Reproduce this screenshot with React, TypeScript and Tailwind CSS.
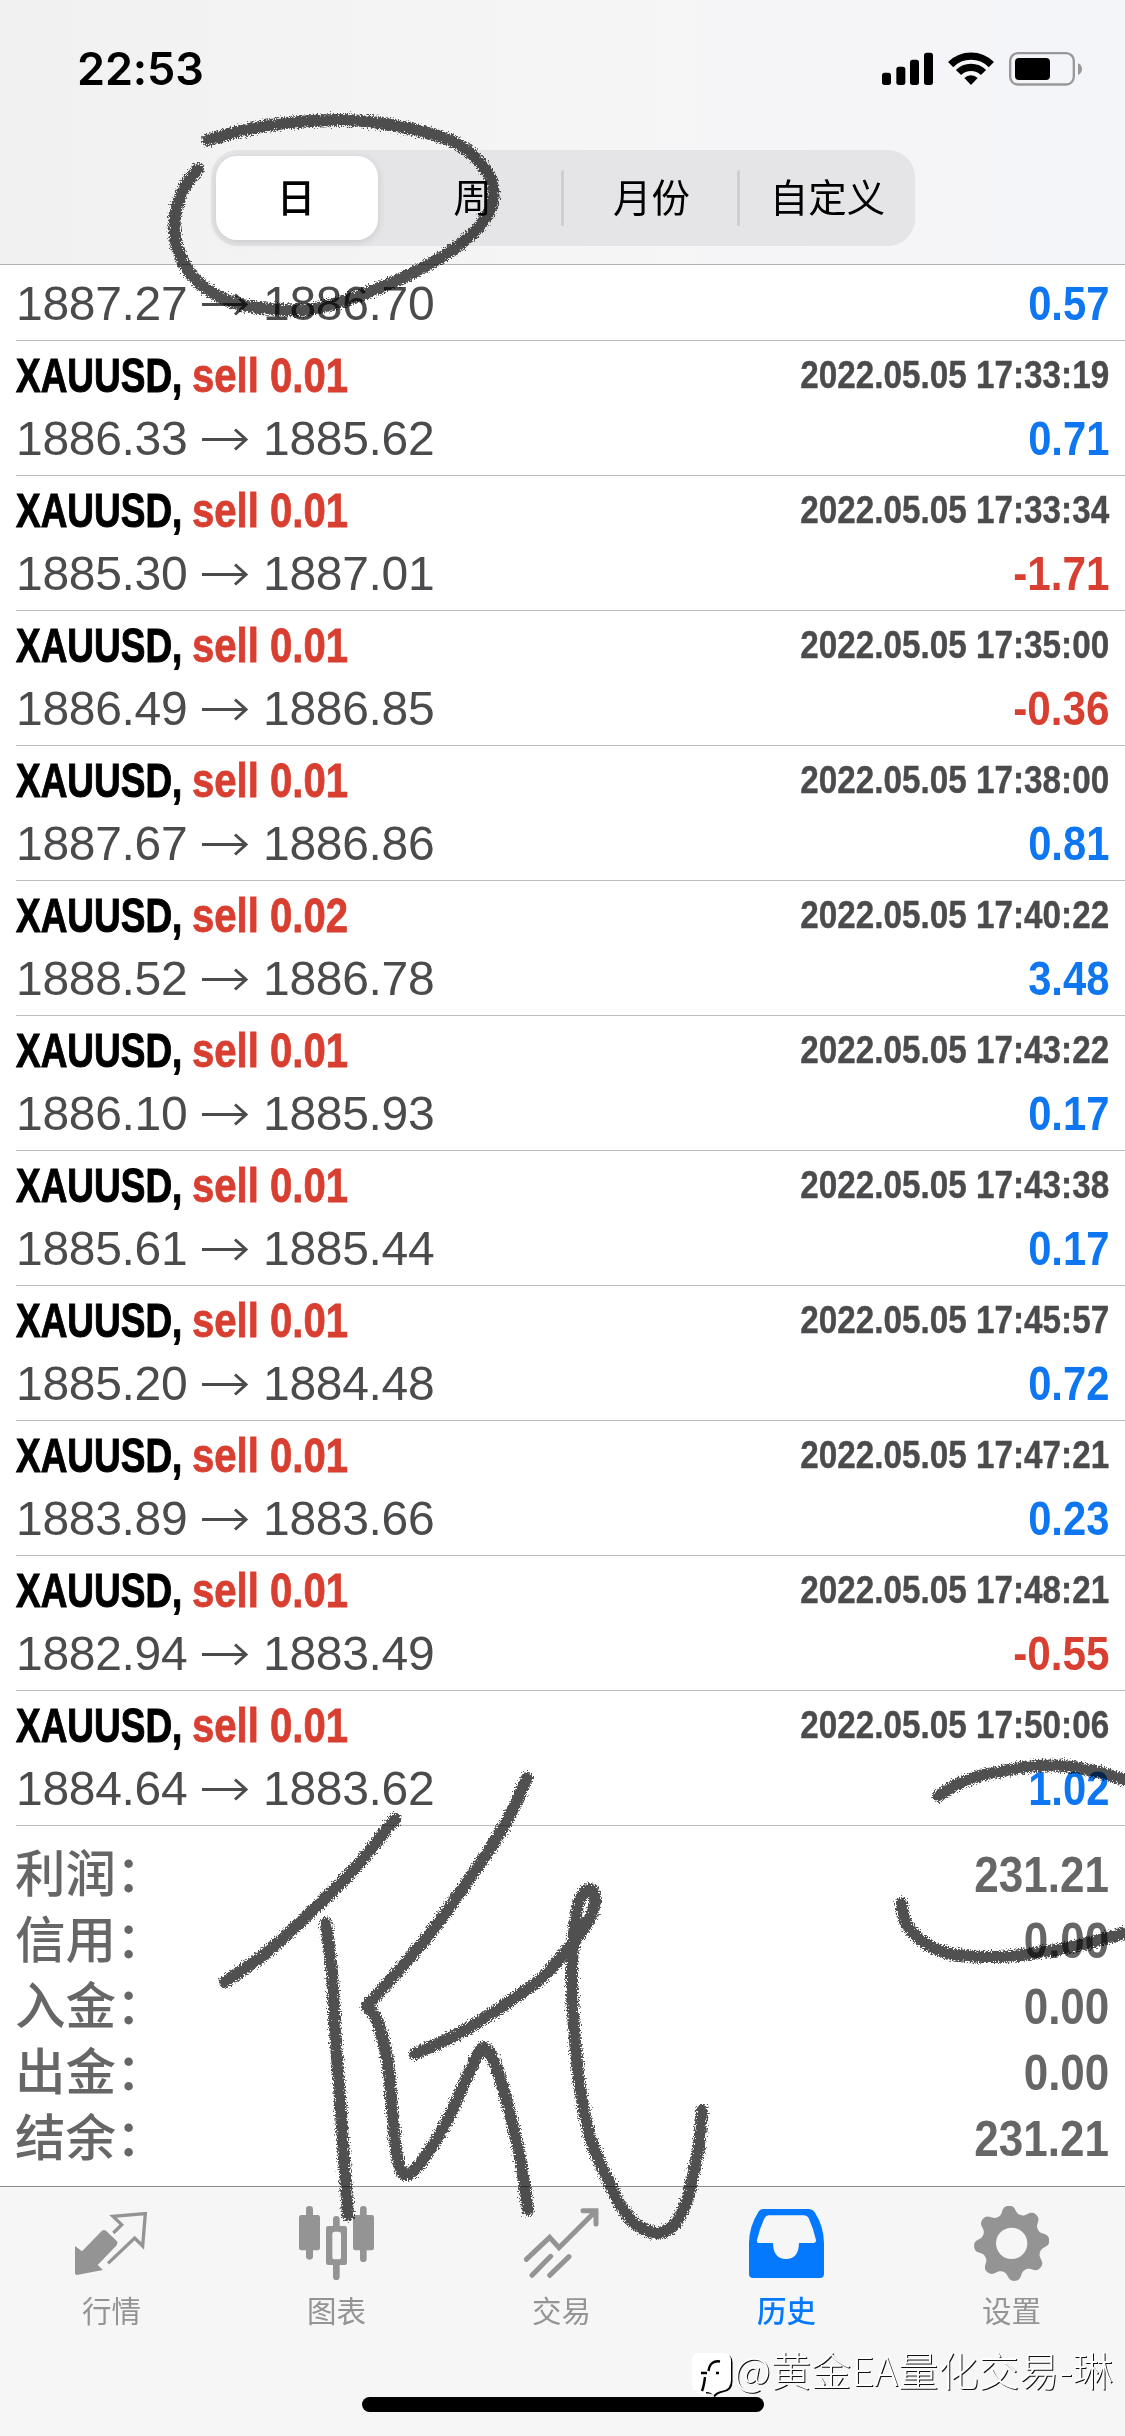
import React from "react";

type Point = [number, number];

const cjk = "font-['Noto_Sans_CJK_SC',sans-serif]";

const trades = [
  { lots: "0.01", time: "2022.05.05 17:33:19", open: "1886.33", close: "1885.62", profit: "0.71" },
  { lots: "0.01", time: "2022.05.05 17:33:34", open: "1885.30", close: "1887.01", profit: "-1.71" },
  { lots: "0.01", time: "2022.05.05 17:35:00", open: "1886.49", close: "1886.85", profit: "-0.36" },
  { lots: "0.01", time: "2022.05.05 17:38:00", open: "1887.67", close: "1886.86", profit: "0.81" },
  { lots: "0.02", time: "2022.05.05 17:40:22", open: "1888.52", close: "1886.78", profit: "3.48" },
  { lots: "0.01", time: "2022.05.05 17:43:22", open: "1886.10", close: "1885.93", profit: "0.17" },
  { lots: "0.01", time: "2022.05.05 17:43:38", open: "1885.61", close: "1885.44", profit: "0.17" },
  { lots: "0.01", time: "2022.05.05 17:45:57", open: "1885.20", close: "1884.48", profit: "0.72" },
  { lots: "0.01", time: "2022.05.05 17:47:21", open: "1883.89", close: "1883.66", profit: "0.23" },
  { lots: "0.01", time: "2022.05.05 17:48:21", open: "1882.94", close: "1883.49", profit: "-0.55" },
  { lots: "0.01", time: "2022.05.05 17:50:06", open: "1884.64", close: "1883.62", profit: "1.02" },
];

const summary = [
  ["利润", "231.21"],
  ["信用", "0.00"],
  ["入金", "0.00"],
  ["出金", "0.00"],
  ["结余", "231.21"],
];

const strokes: Point[][] = [
  [[208, 140], [245, 130], [287, 123], [345, 120], [402, 127], [456, 143], [487, 172], [493, 200], [478, 228], [440, 258], [384, 286], [323, 307], [284, 310], [235, 303], [197, 281], [178, 250], [175, 218], [183, 190], [198, 169]],
  [[395, 1819], [355, 1868], [312, 1911], [266, 1953], [225, 1982]],
  [[326, 1923], [332, 1974], [335, 2031], [340, 2098], [345, 2174], [348, 2215]],
  [[527, 1778], [503, 1828], [463, 1888], [424, 1941], [367, 2006]],
  [[367, 2006], [378, 2023], [388, 2064], [393, 2121], [398, 2161], [406, 2175], [422, 2161], [447, 2121], [470, 2071], [484, 2048], [497, 2069], [510, 2114], [521, 2163], [528, 2210]],
  [[415, 2054], [460, 2033], [503, 2006], [542, 1978], [560, 1958], [577, 1938], [590, 1918], [595, 1902], [593, 1891], [587, 1890], [579, 1902], [574, 1933], [572, 1973], [573, 2013], [579, 2080], [590, 2137], [608, 2180], [622, 2208], [637, 2225], [657, 2233], [674, 2225], [687, 2200], [694, 2170], [699, 2147], [702, 2110]],
  [[938, 1796], [958, 1784], [987, 1774], [1037, 1766], [1073, 1767], [1102, 1773], [1135, 1783]],
  [[901, 1903], [906, 1923], [922, 1941], [947, 1953], [987, 1957], [1030, 1954], [1080, 1945], [1135, 1930]],
];

function smooth(p: Point[]) {
  let d = `M${p[0][0]} ${p[0][1]}`;
  for (let i = 0; i < p.length - 1; i++) {
    const a = p[Math.max(i - 1, 0)];
    const b = p[i];
    const c = p[i + 1];
    const e = p[Math.min(i + 2, p.length - 1)];
    d += `C${b[0] + (c[0] - a[0]) / 6} ${b[1] + (c[1] - a[1]) / 6} ${c[0] - (e[0] - b[0]) / 6} ${c[1] - (e[1] - b[1]) / 6} ${c[0]} ${c[1]}`;
  }
  return d;
}

function gearOutline() {
  const pts: string[] = [];
  for (let i = 0; i < 240; i++) {
    const t = (i / 240) * Math.PI * 2;
    const r = 101 + 12 * (Math.tanh(1.3 * Math.cos(8 * (t + (5 * Math.PI) / 180))) / Math.tanh(1.3));
    pts.push(`${(995 + r * Math.cos(t)).toFixed(1)} ${(160 + r * Math.sin(t)).toFixed(1)}`);
  }
  return `M${pts.join("L")}Z`;
}

function Pencil() {
  return (
    <svg className="pointer-events-none absolute inset-0 mix-blend-multiply" width="1125" height="2436" viewBox="0 0 1125 2436" fill="none">
      <defs>
        <filter id="rough" filterUnits="userSpaceOnUse" x="0" y="0" width="1125" height="2436" colorInterpolationFilters="sRGB">
          <feTurbulence type="fractalNoise" baseFrequency="0.7" numOctaves="2" seed="4" result="n" />
          <feDisplacementMap in="SourceGraphic" in2="n" scale="9" xChannelSelector="R" yChannelSelector="G" />
        </filter>
      </defs>
      <g stroke="#505050" strokeWidth="12" strokeLinecap="round" strokeLinejoin="round" filter="url(#rough)">
        {strokes.map((s, i) => (
          <path key={i} d={smooth(s)} />
        ))}
      </g>
    </svg>
  );
}

function StatusIcons() {
  return (
    <svg width="201" height="34" viewBox="66 36 603 102">
      <rect x="66" y="98" width="27" height="37" rx="8" />
      <rect x="109" y="80" width="27" height="55" rx="8" />
      <rect x="150" y="59" width="27" height="76" rx="8" />
      <rect x="192" y="38" width="27" height="97" rx="8" />
      <g fill="none" stroke="#000" strokeWidth="22">
        <path d="M272 74A86 86 0 0 1 394 74" />
        <path d="M295.500 97.500A53 53 0 0 1 370.500 97.500" />
      </g>
      <path d="M333 135L313 114A29 29 0 0 1 353 114Z" />
      <rect x="450.500" y="39.500" width="191" height="94" rx="23" fill="none" stroke="#98989a" strokeWidth="7" />
      <rect x="465" y="54" width="105" height="66" rx="12" />
      <path d="M654 70Q666 76 666 87Q666 99 654 105Z" fill="#98989a" />
    </svg>
  );
}

function Arrow() {
  return (
    <svg width="48" height="26" viewBox="0 0 48 26" fill="none" stroke="#4b4b4e" strokeWidth="3">
      <path d="M1 13.500H45M34 3.500L45 13.500L34 23.500" />
    </svg>
  );
}

function PriceLine({ open, close, profit }: { open: string; close: string; profit: string }) {
  return (
    <div className="flex h-[57px] justify-between leading-[57px]">
      <div className="flex items-center text-[48px] tracking-[-0.3px] text-[#4b4b4e]">
        <span className="w-[185px]">{open}</span>
        <Arrow />
        <span className="ml-[14px]">{close}</span>
      </div>
      <span
        className={
          profit.startsWith("-")
            ? "origin-right scale-x-[0.88] text-[48px] font-bold text-[#d83f30]"
            : "origin-right scale-x-[0.87] text-[48px] font-bold text-[#0d76f0]"
        }
      >
        {profit}
      </span>
    </div>
  );
}

function Tab({ label, box, active, children }: { label: string; box: string; active?: boolean; children: React.ReactNode }) {
  return (
    <div className={active ? "flex flex-1 flex-col items-center font-medium text-[#0579fe]" : "flex flex-1 flex-col items-center text-[#949494]"}>
      <svg className="mt-[19px]" width="75" height="75" viewBox={box} fill="currentColor">
        {children}
      </svg>
      <span className={`${cjk} mt-[8px] text-[29.500px] leading-[40px]`}>{label}</span>
    </div>
  );
}

export default function App() {
  return (
    <div className="relative isolate flex h-[2436px] w-[1125px] flex-col overflow-hidden bg-white font-['Liberation_Sans',Arial,sans-serif]">
      <header className="h-[265px] shrink-0 border-b border-[#b2b1b3] bg-gradient-to-r from-[#f1f1f2] via-[#f6f5f6] to-[#f4f5f9]">
        <div className="flex h-[150px] items-start justify-between pr-[42px] pl-[77px]">
          <span className="mt-[42px] font-['Inter',sans-serif] text-[45px] leading-[54px] font-semibold tracking-[-0.1px]">22:53</span>
          <div className="mt-[52px]">
            <StatusIcons />
          </div>
        </div>
        <div className={`${cjk} ml-[211px] flex h-24 w-[704px] items-center rounded-[27px] bg-[#e5e4e6] text-[38.500px] leading-[84px]`}>
          <div className="ml-[5px] h-[84px] w-[162px] rounded-[21px] bg-white text-center font-medium shadow-[0_2px_8px_rgba(0,0,0,0.12)]">
            <span className="relative -top-[3px] -left-px">日</span>
          </div>
          <div className="h-[84px] w-[183px] pl-1 text-center"><span className="relative -top-[3px] left-px">周</span></div>
          <div className="h-14 w-[3px] rounded bg-[#cfced1]" />
          <div className="h-[84px] w-[173px] text-center"><span className="relative -top-[3px] left-px">月份</span></div>
          <div className="h-14 w-[3px] rounded bg-[#cfced1]" />
          <div className="h-[84px] w-[173px] text-center"><span className="relative -top-[3px] left-px">自定义</span></div>
        </div>
      </header>

      <main className="h-[1921px] shrink-0 pl-4">
        <div className="h-[76px] border-b border-[#bbbcbc] pt-[10px] pr-4">
          <PriceLine open="1887.27" close="1886.70" profit="0.57" />
        </div>
        {trades.map((t) => (
          <div key={t.time} className="h-[135px] border-b border-[#bbbcbc] pr-4">
            <div className="flex h-[69px] justify-between leading-[69px] font-bold">
              <div className="flex text-[48px]">
                <span className="w-[176px] origin-left scale-x-[0.77] text-black [-webkit-text-stroke:1px_currentColor]">XAUUSD,</span>
                <span className="origin-left scale-x-[0.835] whitespace-nowrap text-[#d83f30] [-webkit-text-stroke:0.8px_currentColor]">sell {t.lots}</span>
              </div>
              <span className="origin-right scale-x-[0.853] text-[39px] leading-[67px] whitespace-nowrap text-[#4b4b4e] [-webkit-text-stroke:0.4px_currentColor]">{t.time}</span>
            </div>
            <PriceLine open={t.open} close={t.close} profit={t.profit} />
          </div>
        ))}
        <div className="pt-4 pr-4 text-[#666]">
          {summary.map(([label, value]) => (
            <div key={label} className="flex h-[66px] justify-between leading-[66px]">
              <span className="relative -left-px font-['Liberation_Sans','Noto_Sans_CJK_SC',sans-serif] text-[50.500px] font-medium">{label}：</span>
              <span className="origin-right scale-x-[0.88] text-[50px] font-bold">{value}</span>
            </div>
          ))}
        </div>
      </main>

      <footer className="flex flex-1 flex-col border-t border-[#8c8c8c] bg-[#f6f6f6]">
        <nav className="-ml-px flex h-[210px] w-[1125px]">
          <Tab label="行情" box="42 48 225 225">
            <path d="M45 168L66 184L126 122Q132 118 138 122L171 154Q175 160 170 166L113 225L129 240L50 255Q45 254 45 248Z" />
            <path d="M160 129L185 104L159 79L256 71L248 168L224 144L144 220" fill="none" stroke="currentColor" strokeWidth="10" />
          </Tab>
          <Tab label="图表" box="717 48 225 225">
            <rect x="717" y="75" width="63" height="106" rx="7" />
            <rect x="738" y="48" width="21" height="161" rx="10" />
            <path fillRule="evenodd" d="M805 108H854Q861 108 861 115V218Q861 225 854 225H805Q798 225 798 218V115Q798 108 805 108ZM824 125Q817 125 817 133V200Q817 208 824 208H836Q843 208 843 200V133Q843 125 836 125Z" />
            <path d="M819 110V88A10 10 0 0 1 839 88V110ZM819 223V260A10 10 0 0 0 839 260V223Z" />
            <rect x="879" y="75" width="63" height="106" rx="7" />
            <rect x="900" y="48" width="20" height="168" rx="10" />
          </Tab>
          <Tab label="交易" box="73 48 225 225">
            <g fill="none" stroke="currentColor" strokeWidth="15" strokeLinecap="round">
              <path d="M80 208L150 142L178 173L286 65M250 62H289V102M97 256L153 199M150 256L208 200" />
            </g>
          </Tab>
          <Tab label="历史" box="747 48 225 225" active>
            <path
              fillRule="evenodd"
              d="M790 57H925Q938 57 945 68Q972 110 972 160V252Q972 264 960 264H759Q747 264 747 252V160Q747 110 775 66Q780 57 790 57ZM806 76Q798 76 794 84Q780 112 771 150Q769 159 779 159H819Q820 207 858 207Q896 207 897 159H940Q949 159 948 150Q940 115 926 84Q922 76 912 76Z"
            />
          </Tab>
          <Tab label="设置" box="882 48 225 225">
            <path fillRule="evenodd" d={`${gearOutline()}M948 160a47 47 0 1 0 94 0a47 47 0 1 0 -94 0Z`} />
          </Tab>
        </nav>
        <div className="ml-[362px] h-[15px] w-[402px] rounded-full bg-black" />
      </footer>

      <Pencil />

      <div className="absolute top-[2343px] left-[692px] flex items-start">
        <svg className="mt-[10px]" width="42" height="46" viewBox="0 0 42 46">
          <path d="M8 0H31Q39 0 39 8V27Q39 37 29 38Q24 39 21 43Q20 39 14 39H8Q0 39 0 30V8Q0 0 8 0Z" fill="#000" transform="translate(1.500 1.500)" />
          <path d="M8 0H31Q39 0 39 8V27Q39 37 29 38Q24 39 21 43Q20 39 14 39H8Q0 39 0 30V8Q0 0 8 0Z" fill="#fff" />
          <path d="M0 30V8Q0 0 8 0V41Q0 39 0 30ZM8 39H14V42H8Z" fill="#fff" />
          <path d="M28 8.500Q18 7 16.500 18M13 24Q12 33 10 38M9 20H15M24 20H27" fill="none" stroke="#000" strokeWidth="2.400" />
        </svg>
        <span className={`${cjk} text-[40.300px] leading-[52px] font-light whitespace-nowrap text-white [text-shadow:1px_1px_0.500px_#111]`}>
          @黄金EA量化交易-琳
        </span>
      </div>
    </div>
  );
}
